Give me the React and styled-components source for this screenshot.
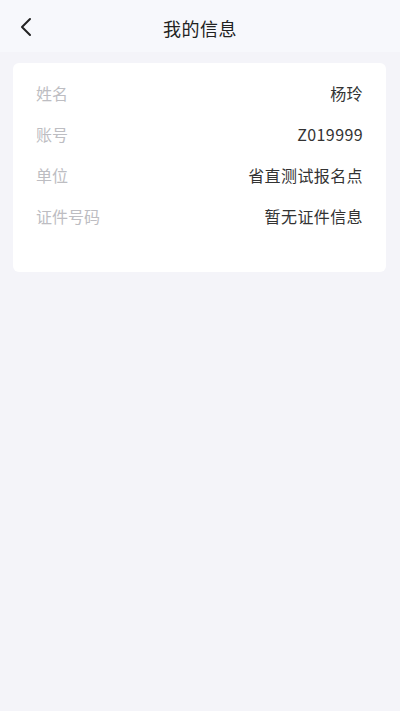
import React from 'react';
import styled, { createGlobalStyle } from 'styled-components';

const GlobalStyle = createGlobalStyle`
  html, body {
    margin: 0;
    padding: 0;
    background-color: #f4f4f9;
    font-family: "Noto Sans CJK SC", "Noto Sans", sans-serif;
  }
`;

const Page = styled.div`
  min-height: 711px;
  background-color: #f4f4f9;
`;

const Header = styled.header`
  position: relative;
  height: 48px;
  padding-top: 4px;
  display: flex;
  align-items: center;
  justify-content: center;
  background-color: #f7f8fc;
`;

const BackButton = styled.button`
  position: absolute;
  left: 14px;
  top: 15px;
  width: 24px;
  height: 24px;
  padding: 0;
  border: none;
  background: none;
  display: flex;
  align-items: center;
  justify-content: center;
  color: #222;
`;

const Title = styled.h1`
  margin: 0;
  font-size: 18px;
  font-weight: 400;
  color: #222;
  letter-spacing: 0.5px;
`;

const Card = styled.section`
  margin: 11px 14px 0 13px;
  padding: 9px 23px 36px;
  background-color: #fff;
  border-radius: 6px;
`;

const Row = styled.div`
  display: flex;
  justify-content: space-between;
  align-items: center;
  height: 41px;
  font-size: 16px;
`;

const Label = styled.span`
  color: #bdbdc2;
`;

const Value = styled.span`
  color: #333;
  letter-spacing: 0.4px;
`;

const rows = [
  ['姓名', '杨玲'],
  ['账号', 'Z019999'],
  ['单位', '省直测试报名点'],
  ['证件号码', '暂无证件信息'],
];

export default function App() {
  return (
    <Page>
      <GlobalStyle />
      <Header>
        <BackButton type="button" aria-label="返回">
          <svg width="14" height="20" viewBox="0 0 14 20" fill="none">
            <path d="M11 2 L3 10 L11 18" stroke="#222" strokeWidth="2" strokeLinecap="round" strokeLinejoin="round" />
          </svg>
        </BackButton>
        <Title>我的信息</Title>
      </Header>
      <Card>
        {rows.map(([label, value]) => (
          <Row key={label}>
            <Label>{label}</Label>
            <Value>{value}</Value>
          </Row>
        ))}
      </Card>
    </Page>
  );
}
